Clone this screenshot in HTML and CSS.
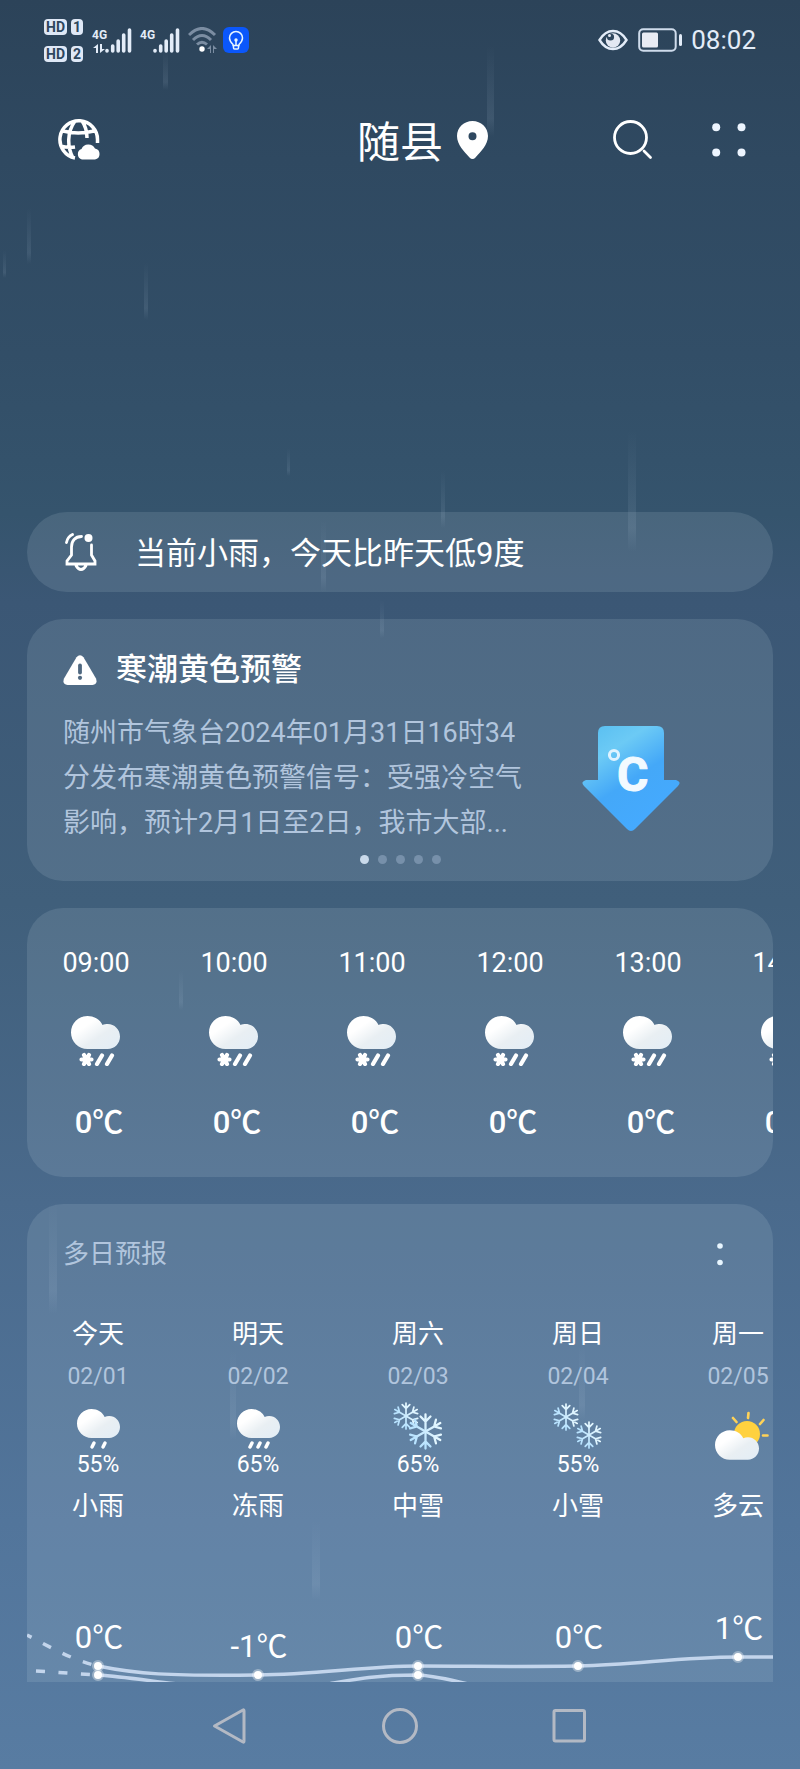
FILE: index.html
```html
<!DOCTYPE html>
<html lang="zh-CN">
<head>
<meta charset="UTF-8">
<meta name="viewport" content="width=device-width, initial-scale=1">
<title>随县天气</title>
<link rel="stylesheet" href="styles.css">
</head>
<body>

<!-- shared icons -->
<svg class="defs" aria-hidden="true">
  <defs>
    <linearGradient id="cloudFill" x1="0" y1="0" x2="1" y2="1">
      <stop offset="0.3" stop-color="#fff"/><stop offset="0.6" stop-color="#e9eff3"/><stop offset="1" stop-color="#e2edf6"/>
    </linearGradient>
    <linearGradient id="flakeFill" x1="0" y1="-12" x2="0" y2="12" gradientUnits="userSpaceOnUse">
      <stop offset="0" stop-color="#e6f8ff"/><stop offset="1" stop-color="#b4e1ff"/>
    </linearGradient>
    <linearGradient id="arrowFill" x1="0" y1="0" x2="0.6" y2="1">
      <stop offset="0" stop-color="#56bdf0"/><stop offset="0.3" stop-color="#6ccaf5"/><stop offset="0.6" stop-color="#44a8f8"/><stop offset="1" stop-color="#45aaff"/>
    </linearGradient>
    <linearGradient id="dropFill" x1="0" y1="0" x2="0" y2="1">
      <stop offset="0" stop-color="#b4c8dc" stop-opacity="0"/><stop offset="0.8" stop-color="#b4c8dc" stop-opacity="0.12"/><stop offset="1" stop-color="#b4c8dc" stop-opacity="0"/>
    </linearGradient>
    <symbol id="cloud" viewBox="0 0 49 33">
      <path fill="url(#cloudFill)" d="M16.500 0C23.500 0 29 3.500 31.500 9C33 8.300 35 8 36.700 8C43.500 8 49 13.500 49 20.500S43.500 33 36.700 33H16.500C7.400 33 0 25.600 0 16.500S7.400 0 16.500 0Z"/>
    </symbol>
    <symbol id="flake" viewBox="-13 -13 26 26">
      <g stroke="url(#flakeFill)" stroke-width="1.600" stroke-linecap="round" fill="none">
        <path d="M.01 12L0-12M-3.500-10.500L0-7L3.500-10.500M-3.500 10.500L0 7L3.500 10.500"/>
        <path transform="rotate(60)" d="M.01 12L0-12M-3.500-10.500L0-7L3.500-10.500M-3.500 10.500L0 7L3.500 10.500"/>
        <path transform="rotate(120)" d="M.01 12L0-12M-3.500-10.500L0-7L3.500-10.500M-3.500 10.500L0 7L3.500 10.500"/>
      </g>
    </symbol>
    <symbol id="sleet" viewBox="0 0 50 50">
      <use href="#cloud" width="49" height="33"/>
      <g stroke="#fff" stroke-width="4.200" stroke-linecap="round">
        <path d="M10.500 43.500H20.500M13 39L18 48M18 39L13 48M31 39.500L26 48M41 39.500L36 48"/>
      </g>
    </symbol>
    <symbol id="bars" viewBox="0 0 27 25">
      <g stroke="#e3ecf8" stroke-width="3.600" stroke-linecap="round">
        <path d="M2 22.500V23M7.700 18V23M13.200 13V23M18.700 7V23M24.500 2V23"/>
      </g>
    </symbol>
  </defs>
</svg>

<div class="app">
  <svg class="rain" width="800" height="1769" aria-hidden="true">
    <g fill="url(#dropFill)">
      <rect x="163" y="50" width="5" height="40"/>
      <rect x="487" y="45" width="7" height="92"/>
      <rect x="27" y="208" width="4" height="56"/>
      <rect x="3" y="250" width="3" height="28"/>
      <rect x="144" y="262" width="4" height="58"/>
      <rect x="287" y="448" width="3" height="28"/>
      <rect x="441" y="470" width="4" height="58"/>
      <rect x="628" y="430" width="8" height="122"/>
      <rect x="321" y="520" width="5" height="72"/>
      <rect x="380" y="600" width="4" height="38"/>
      <rect x="179" y="970" width="4" height="40"/>
      <rect x="49" y="1200" width="8" height="114"/>
      <rect x="230" y="1350" width="6" height="90"/>
      <rect x="579" y="1345" width="6" height="75"/>
      <rect x="312" y="1520" width="8" height="80"/>
    </g>
  </svg>

  <div class="status">
    <div class="hd">
      <div><span>HD</span><span>1</span></div>
      <div><span>HD</span><span>2</span></div>
    </div>
    <div class="sim">
      <div class="net">4G<svg width="12" height="9" viewBox="0 0 12 9"><path d="M0 4L5 0V9H3V4ZM7 0H9V5H12L7 9Z" fill="#e3ecf8"/></svg></div>
      <svg width="27" height="25"><use href="#bars"/></svg>
    </div>
    <div class="sim">
      <div class="net">4G</div>
      <svg width="27" height="25"><use href="#bars"/></svg>
    </div>
    <svg class="wifi" width="30" height="26" viewBox="0 0 30 26">
      <g fill="none" stroke="#7b8da2" stroke-width="3"><path d="M1 8Q14-5 27 8M5 13Q14 4 23 13M9 17.500Q14 13 19 17.500"/></g>
      <path d="M19 22L23 18V26H22V22ZM25 18L29 22H26V26H25Z" fill="#7b8da2"/>
      <circle cx="14" cy="22" r="2.700" fill="#fff"/>
    </svg>
    <svg class="bulb" width="26" height="26" viewBox="0 0 26 26">
      <rect width="26" height="26" rx="6" fill="#0b57fb"/>
      <path d="M10 18.500V17.500C8.500 16 6.500 14 6.500 11A6.500 6.500 0 0 1 19.500 11C19.500 14 17.500 16 16 17.500V18.500ZM10.500 18.500V21Q10.500 22 11.500 22H14.500Q15.500 22 15.500 21V18.500M13 18V13.500" fill="none" stroke="#e8f6ff" stroke-width="1.500"/>
      <circle cx="13" cy="13" r="1.700" fill="#e8f6ff"/>
    </svg>
    <svg class="eye" width="30" height="22" viewBox="0 0 30 22">
      <path d="M1.500 11Q7 2 15 2T28.500 11Q23 20 15 20T1.500 11Z" fill="none" stroke="#e3ecf8" stroke-width="2.400"/>
      <circle cx="15" cy="11.500" r="7.200" fill="#e3e8f2"/><circle cx="12.500" cy="8" r="3.600" fill="#2e465d"/><circle cx="11.500" cy="6.500" r="1.500" fill="#e3e8f2"/>
    </svg>
    <svg width="44" height="24" viewBox="0 0 44 24">
      <rect x="1.200" y="1.200" width="36.500" height="21.600" rx="4" fill="none" stroke="#cfdcec" stroke-width="2"/>
      <rect x="4" y="4.500" width="16" height="15" rx="1.500" fill="#e8ebf3"/>
      <rect x="41" y="6" width="3" height="12" rx="1.500" fill="#e3ecf8"/>
    </svg>
    <span class="time">08:02</span>
  </div>

  <header class="top">
    <button type="button" aria-label="城市管理" class="city">
      <svg width="42" height="42" viewBox="0 0 42 42" fill="none" stroke="#fff" stroke-width="3.500">
        <path d="M17 39A18.800 18.800 0 1 1 39.500 21V24M15 39C9 28 9 13 17 2M24 2Q29 9 29 19M5 12Q20 16 36 12M2 27Q10 29 17 28"/>
        <path d="M24 40.500A5.500 5.500 0 0 1 23.500 30A7.500 7.500 0 0 1 37 29.500A5.600 5.600 0 0 1 37 40.500Z" fill="#fff" stroke="none"/>
      </svg>
    </button>
    <h1>随县</h1>
    <div class="tools">
      <svg class="pin" width="31" height="38" viewBox="0 0 31 38"><path fill="#fff" fill-rule="evenodd" d="M15.500 0C24 0 31 6.500 31 15C31 24 23.500 30.500 18.500 36.500Q15.500 39.500 12.500 36.500C7.500 30.500 0 24 0 15C0 6.500 7 0 15.500 0ZM15.500 11.300A4 4 0 1 0 15.500 19.300A4 4 0 1 0 15.500 11.300Z"/></svg>
      <button type="button" aria-label="搜索" class="search">
        <svg width="40" height="40" viewBox="0 0 40 40" fill="none" stroke="#fff" stroke-width="2.800" stroke-linecap="round"><circle cx="17.500" cy="17.500" r="16"/><path d="M31 31L37.500 37.500"/></svg>
      </button>
      <button type="button" aria-label="更多">
        <svg width="34" height="34" viewBox="0 0 34 34" fill="#edf5ff"><circle cx="4.200" cy="4.200" r="4"/><circle cx="29.500" cy="4.200" r="4"/><circle cx="4.200" cy="29.500" r="4"/><circle cx="29.500" cy="29.500" r="4"/></svg>
      </button>
    </div>
  </header>

  <main>
    <section class="card notice">
      <svg width="32" height="38" viewBox="0 0 32 38" fill="none" stroke="#fff" stroke-width="2.800" stroke-linecap="round">
        <path d="M16.500 3.500C10 3.500 6.500 8 6.500 14V22L2 28V31H30V28L26.500 22V12M11 32.500Q13 36.500 16 36.500T21 32.500M1.500 9.500Q2.500 4 7.500 1.500"/>
        <circle cx="23.500" cy="5" r="4" fill="#fff" stroke="none"/>
      </svg>
      <span>当前小雨，今天比昨天低9度</span>
    </section>

    <section class="card alert">
      <h2>
        <svg width="34" height="30" viewBox="0 0 34 30"><path fill="#fff" d="M13.500 2.300Q17-2 20.500 2.300L33 23.500Q35 29.500 29.500 30H4.500Q-1 29.500 1 23.500Z"/><path d="M17 10.500V17.500" stroke="#4f6880" stroke-width="3.800" stroke-linecap="round"/><circle cx="17" cy="22.800" r="2.100" fill="#4f6880"/></svg>
        寒潮黄色预警
      </h2>
      <div class="row">
        <p>随州市气象台2024年01月31日16时34分发布寒潮黄色预警信号：受强冷空气影响，预计2月1日至2日，我市大部...</p>
        <svg class="drop" width="98" height="106" viewBox="0 0 98 106">
          <path fill="url(#arrowFill)" d="M23 0H75Q82 0 82 7V54H94Q100 56 96 60L53 103Q49 107 45 103L2 60Q-2 56 4 54H16V7Q16 0 23 0Z"/>
          <circle cx="32" cy="29" r="4.600" fill="none" stroke="#dff3ff" stroke-width="3"/>
          <text x="35" y="65" class="big">C</text>
        </svg>
      </div>
      <div class="dots"><i class="on"></i><i></i><i></i><i></i><i></i></div>
    </section>

    <section class="card hourly">
      <ul>
        <li><span>09:00</span><svg width="50" height="50"><use href="#sleet"/></svg><b>0℃</b></li>
        <li><span>10:00</span><svg width="50" height="50"><use href="#sleet"/></svg><b>0℃</b></li>
        <li><span>11:00</span><svg width="50" height="50"><use href="#sleet"/></svg><b>0℃</b></li>
        <li><span>12:00</span><svg width="50" height="50"><use href="#sleet"/></svg><b>0℃</b></li>
        <li><span>13:00</span><svg width="50" height="50"><use href="#sleet"/></svg><b>0℃</b></li>
        <li><span>14:00</span><svg width="50" height="50"><use href="#sleet"/></svg><b>0℃</b></li>
      </ul>
    </section>

    <section class="card daily">
      <div class="head">
        <h2>多日预报</h2>
        <button type="button" aria-label="菜单"><svg width="6" height="23" viewBox="0 0 6 23" fill="#e8f6ff"><circle cx="3" cy="3" r="2.800"/><circle cx="3" cy="19.500" r="2.800"/></svg></button>
      </div>
      <ul>
        <li>
          <span class="day">今天</span><span class="date">02/01</span>
          <svg width="64" height="52"><use href="#cloud" x="11" y="9" width="43" height="29"/><path d="M28 43L26 47M39 43L37 47" stroke="#fff" stroke-width="3.500" stroke-linecap="round"/></svg>
          <span class="pct">55%</span><span class="day">小雨</span>
        </li>
        <li>
          <span class="day">明天</span><span class="date">02/02</span>
          <svg width="64" height="52"><use href="#cloud" x="11" y="9" width="43" height="29"/><path d="M26 43L24 47M34 43L32 47M42 43L40 47" stroke="#fff" stroke-width="3.500" stroke-linecap="round"/></svg>
          <span class="pct">65%</span><span class="day">冻雨</span>
        </li>
        <li>
          <span class="day">周六</span><span class="date">02/03</span>
          <svg width="64" height="52"><use href="#flake" x="6" y="2" width="28" height="28"/><use href="#flake" x="21" y="13" width="37" height="37"/></svg>
          <span class="pct">65%</span><span class="day">中雪</span>
        </li>
        <li>
          <span class="day">周日</span><span class="date">02/04</span>
          <svg width="64" height="52"><use href="#flake" x="6" y="3" width="28" height="28"/><use href="#flake" x="29" y="21" width="28" height="28"/></svg>
          <span class="pct">55%</span><span class="day">小雪</span>
        </li>
        <li>
          <span class="day">周一</span><span class="date">02/05</span>
          <svg width="64" height="52">
            <circle cx="41" cy="34" r="13" fill="#ffd13f"/>
            <path d="M42.500 13L42 18M27 18L30.500 22M57.500 20L54 24M57 35.500H61.500" stroke="#ffd257" stroke-width="2.600" stroke-linecap="round"/>
            <use href="#cloud" x="9" y="30" width="44" height="30"/>
          </svg>
          <span class="pct"></span><span class="day">多云</span>
        </li>
      </ul>
      <!-- high / low temperature curves -->
      <svg class="chart" width="746" height="72" viewBox="0 0 746 72">
        <g fill="none" stroke="#c3d5ec" stroke-width="3.500">
          <path d="M0 25C25 38 45 50 71 56" stroke-dasharray="9 13" stroke-dashoffset="4"/>
          <path d="M9 61L71 65" stroke-dasharray="9 13.500"/>
          <path d="M71 56C110 64 140 66 231 65C290 64.500 340 56 391 56C450 56 480 57 551 56C610 55 650 47 711 47H746"/>
          <path d="M71 65C100 67 130 72 160 75M290 76C320 71 340 65 391 65C410 66 425 70 445 75"/>
        </g>
        <g fill="#fff" stroke="#fff" stroke-opacity="0.35" stroke-width="4">
          <circle cx="71" cy="56" r="4"/><circle cx="71" cy="65" r="4"/><circle cx="231" cy="65" r="4"/>
          <circle cx="391" cy="56" r="4"/><circle cx="391" cy="65" r="4"/><circle cx="551" cy="56" r="4"/><circle cx="711" cy="47" r="4"/>
        </g>
        <g class="temps">
          <text x="72" y="38">0℃</text>
          <text x="232" y="47">-1℃</text>
          <text x="392" y="38">0℃</text>
          <text x="552" y="38">0℃</text>
          <text x="712" y="29">1℃</text>
        </g>
      </svg>
    </section>
  </main>

  <nav class="keys">
    <button type="button" aria-label="返回"><svg width="36" height="38" viewBox="0 0 36 38"><path d="M2.500 19L31 3Q32 2.500 32 4V34Q32 35.500 31 35Z" stroke-linejoin="round"/></svg></button>
    <button type="button" aria-label="主页"><svg width="36" height="38" viewBox="0 0 36 38"><circle cx="18" cy="19" r="16.500"/></svg></button>
    <button type="button" aria-label="多任务"><svg width="36" height="38" viewBox="0 0 36 38"><rect x="2" y="3.500" width="30.500" height="30.500" rx="1.500"/></svg></button>
  </nav>
</div>

</body>
</html>
```
FILE: styles.css
```css
*{box-sizing:border-box;}
body{margin:0;color:#fff;font-family:Roboto,"Noto Sans CJK SC",sans-serif;}
h1,h2,p,ul{margin:0;padding:0;font-weight:400;}
ul{list-style:none;}
svg{display:block;flex:none;}
button{border:0;padding:0;background:none;color:inherit;cursor:pointer;}
.defs{position:absolute;width:0;height:0;}

.app{
	position:relative;
	overflow:hidden;
	background:linear-gradient(#2c4359 0%,#2f4961 9%,#324e67 20%,#35546d 29%,#3b5775 34%,#405f7b 51%,#4a6a8c 68%,#52759b 86%,#587ca2 100%);
}
.rain{position:absolute;left:0;top:0;z-index:1;pointer-events:none;}

/* status bar */
.status{display:flex;align-items:center;height:80px;padding:0 44px;color:#e3ecf8;}
.hd{display:flex;flex-direction:column;gap:11px;margin-right:9px;}
.hd div{display:flex;gap:4px;}
.hd span{height:16px;padding:0 2px;border-radius:4px;background:#dfe8f6;color:#2e465d;font-size:14px;line-height:16px;font-weight:700;}
.sim{display:flex;margin-right:8px;}
.sim svg{margin-left:-1px;}
.net{width:14px;font-size:12px;line-height:14px;font-weight:700;}
.net svg{margin:2px 0 0 1px;}
.bulb{margin-left:5px;}
.eye{margin-left:auto;margin-right:10px;}
.time{margin-left:9px;font-size:26px;line-height:30px;}

.top{display:grid;grid-template-columns:1fr auto 1fr;align-items:center;height:120px;margin-bottom:312px;padding:0 54px;}
.city{justify-self:start;margin-left:4px;}
.top h1{padding-top:6px;font-size:43px;line-height:60px;}
.tools{display:flex;align-items:center;}
.pin{margin-left:14px;}
.search{margin:0 59px 0 auto;}

/* cards */
main{display:flex;flex-direction:column;gap:27px;padding:0 27px;}
.card{overflow:hidden;border-radius:36px;background:rgba(225,240,248,.12);}
.notice{display:flex;align-items:center;gap:38px;height:80px;padding:0 38px;border-radius:40px;font-size:31px;line-height:40px;}
.notice span{padding-top:4px;}

.alert{padding:31px 36px 17px;}
.alert h2{display:flex;align-items:center;gap:19px;font-size:31px;line-height:40px;font-weight:500;}
.row{display:flex;align-items:center;margin-top:21px;}
.row p{width:460px;color:#b1c5dd;font-size:27px;line-height:45px;}
.drop{margin:0 auto 0 59px;}
.big{fill:#f2faff;stroke:#f2faff;stroke-width:1;stroke-linejoin:round;font-size:48px;font-weight:700;}
.dots{display:flex;justify-content:center;gap:9px;margin-top:9px;}
.dots i{width:9px;height:9px;border-radius:50%;background:#7790aa;}
.dots .on{background:#c9d9ea;}

.hourly ul{display:flex;padding:35px 0 33px;}
.hourly li{flex:none;width:138px;display:flex;flex-direction:column;align-items:center;font-size:27px;line-height:40px;}
.hourly svg{margin:33px 0 36px;}
.hourly b{padding-left:6px;font-size:31px;line-height:42px;font-weight:500;}

.daily{padding-top:30px;border-radius:36px 36px 0 0;}
.head{display:flex;justify-content:space-between;align-items:center;padding:0 50px 0 36px;}
.head h2{color:#b1c5dd;font-size:26px;line-height:40px;}
.daily ul{display:flex;margin:40px 0 84px -9px;}
.daily li{flex:none;width:160px;display:flex;flex-direction:column;align-items:center;}
.day{font-size:26px;line-height:40px;}
.date{margin:8px 0;color:#b1c5dd;font-size:23px;line-height:30px;}
.daily li svg{height:52px;overflow:visible;}
.pct{height:26px;margin-bottom:8px;font-size:23px;line-height:26px;}
.temps text{fill:#fff;font-size:31px;text-anchor:middle;}

.keys{display:flex;justify-content:center;align-items:center;gap:134px;height:87px;}
.keys svg{fill:none;stroke:#b3b9c4;stroke-width:3;}
```
